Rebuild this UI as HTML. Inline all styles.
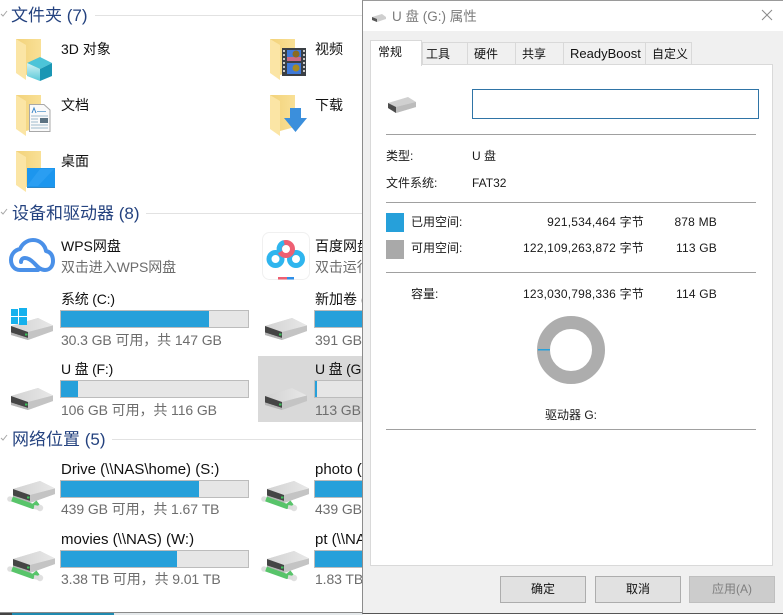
<!DOCTYPE html>
<html lang="zh"><head><meta charset="utf-8"><style>
html,body{margin:0;padding:0;width:783px;height:615px;overflow:hidden;background:#fff}
body{position:relative;font-family:"Liberation Sans","Noto Sans CJK SC",sans-serif;color:#111}
.t{position:absolute;white-space:nowrap;line-height:20px;height:20px;font-size:14px}
.h{font-size:17px;color:#24427f}
.g{color:#6d6d6d;letter-spacing:-.1px}
.n{font-size:15px}
.d{font-size:12px;color:#1a1a1a}
.r{text-align:right;letter-spacing:.2px}
.b{position:absolute;width:187px;height:16px;border:1px solid #bcbcbc;background:#e6e6e6}
.b i{display:block;height:16px;background:#26a0da}
.l{position:absolute;height:1px;background:#e2e2e2}
.s{position:absolute;height:1px;left:386px;width:370px;background:#a0a0a0}
.tab{position:absolute;top:42px;height:21px;border:1px solid #d9d9d9;border-bottom:0;background:#f0f0f0;font-size:12px;line-height:22px;text-align:left;text-indent:6px;color:#111;box-sizing:content-box;white-space:nowrap}
.btn{position:absolute;top:576px;width:84px;height:25px;border:1px solid #adadad;background:#e1e1e1;font-size:12px;line-height:25px;text-align:center;color:#111}
svg{position:absolute;left:0;top:0}
</style></head><body>

<div class="t h" style="left:11px;top:6px">文件夹 (7)</div><div class="l" style="left:95px;width:268px;top:15px"></div>
<div class="t h" style="left:12px;top:204px">设备和驱动器 (8)</div><div class="l" style="left:146px;width:217px;top:213px"></div>
<div class="t h" style="left:12px;top:430px">网络位置 (5)</div><div class="l" style="left:112px;width:251px;top:439px"></div>

<div style="position:absolute;left:258px;top:356px;width:105px;height:66px;background:#d9d9d9"></div>

<svg width="363" height="615" viewBox="0 0 363 615">
<defs>
<linearGradient id="fb" x1="0" y1="0" x2="1" y2="0"><stop offset="0" stop-color="#f2d27a"/><stop offset="1" stop-color="#f9e096"/></linearGradient>
<linearGradient id="top" x1="0" y1="0" x2="1" y2="0"><stop offset="0" stop-color="#d2d2d2"/><stop offset="1" stop-color="#e8e8e8"/></linearGradient>
<linearGradient id="cl" x1="0" y1="0" x2="0" y2="1"><stop offset="0" stop-color="#d3f3f5"/><stop offset="1" stop-color="#58c8d8"/></linearGradient>
<g id="folder">
<polygon points="0,0 25,0 25,32 10,36 0,30" fill="url(#fb)"/>
<polygon points="0,0 10,6 10,41 0,34" fill="#fbe5a5"/>
</g>
<g id="hdd">
<polygon points="0,8 27,0 42,7.500 42,13 17,22 0,17" fill="#d2d2d2"/>
<polygon points="0,8 27,0 42,7.500 17,14" fill="url(#top)"/>
<polygon points="17,14 42,7.500 42,13 17,22" fill="#c4c4c4"/>
<polygon points="0,8 17,14 17,20 0,14.500" fill="#454545"/>
<polygon points="0,14.500 17,20 17,22 0,17" fill="#b5b5b5"/>
<rect x="14" y="15.500" width="2.500" height="2" fill="#3bc45a"/>
</g>
<g id="net">
<use href="#hdd"/>
<circle cx="-3" cy="18" r="2.800" fill="#e0e0e0"/>
<circle cx="27" cy="27" r="3.200" fill="#e0e0e0"/>
<path d="M-1 18L20 25.500L25 21.500" stroke="#58c46a" stroke-width="5" fill="none" stroke-linejoin="round"/>
<path d="M21 26L26 27" stroke="#dcdcdc" stroke-width="4" fill="none"/>
</g>
</defs>

<!-- section chevrons -->
<path d="M1 14l2 2 4-5M1 212l2 2 4-5M1 438l2 2 4-5" fill="none" stroke="#a6a6a6" stroke-width="1"/>

<!-- folders -->
<use href="#folder" x="16" y="39"/><use href="#folder" x="270" y="39"/>
<use href="#folder" x="16" y="95"/><use href="#folder" x="270" y="95"/>
<use href="#folder" x="16" y="151"/>

<!-- cube -->
<polygon points="40,57 52,63 40,69 27,63" fill="#4cc4d8"/>
<polygon points="27,63 40,69 40,81 27,76" fill="url(#cl)"/>
<polygon points="40,69 52,63 52,76 40,81" fill="#1a96b4"/>

<!-- doc -->
<polygon points="29.500,104.500 44,104.500 50,110 50,131.500 29.500,131.500" fill="#fafafa" stroke="#a8a8a8"/>
<path d="M31 116h17M31 119h7M31 122h7M31 125h17M31 128h17" stroke="#9fb9cc" stroke-width="1"/>
<path d="M32 113l2-5 2 5" fill="none" stroke="#3a86c8"/><rect x="37" y="111" width="9" height="1" fill="#7fb0d6"/>
<rect x="40" y="118" width="8" height="5" fill="#5b7282"/>

<!-- film -->
<rect x="282" y="48" width="24" height="28" fill="#3a3f45"/>
<rect x="287" y="50" width="14" height="11" fill="#3f79d8"/>
<rect x="287" y="63" width="14" height="11" fill="#3f79d8"/>
<rect x="287" y="57" width="14" height="4" fill="#c96a86"/>
<circle cx="296" cy="54" r="3.500" fill="#8a6a20"/><circle cx="296" cy="68" r="3.500" fill="#a88a20"/>
<path d="M284 50v24M304 50v24" stroke="#c9c9c9" stroke-width="2" stroke-dasharray="2 2"/>

<!-- arrow -->
<polygon points="290,108 301,108 301,118 307,118 295.500,132 284,118 290,118" fill="#3b8fdc"/>

<!-- desktop -->
<rect x="27" y="168" width="28" height="20" fill="#1c96ee"/>
<polygon points="27,186 40,169 54,169 38,186" fill="#2a9ef2"/>
<rect x="27" y="187" width="28" height="1" fill="#2f86c4"/>

<!-- wps cloud -->
<path d="M38 270H20C14 270 11 265 11 260C11 254 15 250 20 249C22 244 27 240 33 240C40 240 45 245 46 251C51 252 53 256 53 261C53 266 50 270 45 270C40 270 37 266 34 263C31 260 28 258 25 258C22 258 21 260 21 262" fill="none" stroke="#4a90e8" stroke-width="4" stroke-linecap="round" stroke-linejoin="round"/>

<!-- baidu -->
<rect x="262.500" y="232.500" width="47" height="47" rx="7" fill="#fff" stroke="#f0f0f0"/>
<circle cx="275.500" cy="259" r="6.500" fill="none" stroke="#2fb5ee" stroke-width="5"/>
<circle cx="296" cy="259" r="6.500" fill="none" stroke="#2fb5ee" stroke-width="5"/>
<circle cx="286" cy="249" r="6.500" fill="none" stroke="#ee5f72" stroke-width="5"/>
<path d="M280 252a6.500 6.500 0 0 1 4-9.500" fill="none" stroke="#2fb5ee" stroke-width="5"/>
<rect x="278" y="277" width="9" height="2.500" fill="#ee5f72"/><rect x="287" y="277" width="7" height="2.500" fill="#2f8fe8"/>

<!-- drives -->
<use href="#hdd" x="11" y="318"/>
<use href="#hdd" x="265" y="318"/>
<use href="#hdd" x="11" y="388"/>
<use href="#hdd" x="265" y="388"/>
<g fill="#15b1ed"><rect x="11" y="309" width="7" height="7"/><rect x="19" y="308" width="8" height="8"/><rect x="11" y="317" width="7" height="7"/><rect x="19" y="317" width="8" height="8"/></g>
<use href="#net" x="13" y="481"/><use href="#net" x="267" y="481"/>
<use href="#net" x="13" y="551"/><use href="#net" x="267" y="551"/>
</svg>

<div class="t" style="left:61px;top:39px">3D 对象</div>
<div class="t" style="left:315px;top:39px">视频</div>
<div class="t" style="left:61px;top:95px">文档</div>
<div class="t" style="left:315px;top:95px">下载</div>
<div class="t" style="left:61px;top:151px">桌面</div>

<div class="t" style="left:61px;top:236px">WPS网盘</div>
<div class="t g" style="left:61px;top:257px">双击进入WPS网盘</div>
<div class="t" style="left:315px;top:236px">百度网盘</div>
<div class="t g" style="left:315px;top:257px">双击运行百度网盘</div>

<div class="t" style="left:61px;top:289px;letter-spacing:-.2px">系统 (C:)</div>
<div class="b" style="left:60px;top:310px"><i style="width:148px"></i></div>
<div class="t g" style="left:61px;top:330px">30.3 GB 可用，共 147 GB</div>

<div class="t" style="left:315px;top:289px">新加卷 (D:)</div>
<div class="b" style="left:314px;top:310px"><i style="width:100px"></i></div>
<div class="t g" style="left:315px;top:330px">391 GB 可用</div>

<div class="t" style="left:61px;top:359px;letter-spacing:-.2px">U 盘 (F:)</div>
<div class="b" style="left:60px;top:380px"><i style="width:17px"></i></div>
<div class="t g" style="left:61px;top:400px">106 GB 可用，共 116 GB</div>

<div class="t" style="left:315px;top:359px;letter-spacing:-.2px">U 盘 (G:)</div>
<div class="b" style="left:314px;top:380px"><i style="width:2px"></i></div>
<div class="t g" style="left:315px;top:400px">113 GB 可用</div>

<div class="t n" style="left:61px;top:460px">Drive (\\NAS\home) (S:)</div>
<div class="b" style="left:60px;top:480px"><i style="width:138px"></i></div>
<div class="t g" style="left:61px;top:499px">439 GB 可用，共 1.67 TB</div>

<div class="t n" style="left:315px;top:460px">photo (\\NAS)</div>
<div class="b" style="left:314px;top:480px"><i style="width:138px"></i></div>
<div class="t g" style="left:315px;top:499px">439 GB 可用</div>

<div class="t n" style="left:61px;top:530px">movies (\\NAS) (W:)</div>
<div class="b" style="left:60px;top:550px"><i style="width:116px"></i></div>
<div class="t g" style="left:61px;top:569px">3.38 TB 可用，共 9.01 TB</div>

<div class="t n" style="left:315px;top:530px">pt (\\NAS)</div>
<div class="b" style="left:314px;top:550px"><i style="width:100px"></i></div>
<div class="t g" style="left:315px;top:569px">1.83 TB 可用</div>

<!-- bottom strip of background -->
<div style="position:absolute;left:0;top:613px;width:363px;height:2px;background:#e4e8ea"></div>
<div style="position:absolute;left:12px;top:613px;width:102px;height:2px;background:#1f8ab0"></div>
<div style="position:absolute;left:0;top:613px;width:12px;height:2px;background:#444"></div>
<div style="position:absolute;left:0;top:612px;width:363px;height:1px;background:#8a8a8a"></div>

<!-- dialog -->
<div style="position:absolute;left:362px;top:0;width:421px;height:614px;background:#f0f0f0;border-left:1px solid #8c8c8c;border-top:1px solid #9a9a9a;border-bottom:1px solid #555;box-sizing:border-box"></div>
<div style="position:absolute;left:363px;top:1px;width:420px;height:30px;background:#fff"></div>
<div class="t" style="left:392px;top:7px;font-size:13.500px;color:#7c7c7c">U 盘 (G:) 属性</div>

<div style="position:absolute;left:370px;top:64px;width:401px;height:500px;background:#fff;border:1px solid #d9d9d9"></div>
<div class="tab" style="left:422px;width:44px;text-indent:3px">工具</div>
<div class="tab" style="left:467px;width:47px">硬件</div>
<div class="tab" style="left:515px;width:47px">共享</div>
<div class="tab" style="left:563px;width:81px;font-size:13px">ReadyBoost</div>
<div class="tab" style="left:645px;width:45px">自定义</div>
<div class="tab" style="left:370px;top:40px;width:50px;height:25px;background:#fff;line-height:22px;text-indent:7px">常规</div>

<div style="position:absolute;left:472px;top:89px;width:285px;height:28px;border:1px solid #2f74a6;background:#fff"></div>
<div class="s" style="top:134px"></div>
<div class="s" style="top:202px"></div>
<div class="s" style="top:272px"></div>
<div class="s" style="top:429px"></div>

<div class="t d" style="left:386px;top:146px">类型:</div>
<div class="t d" style="left:472px;top:146px">U 盘</div>
<div class="t d" style="left:386px;top:173px">文件系统:</div>
<div class="t d" style="left:472px;top:173px">FAT32</div>

<div style="position:absolute;left:386px;top:213px;width:18px;height:19px;background:#26a0da"></div>
<div style="position:absolute;left:386px;top:240px;width:18px;height:19px;background:#a9a9a9"></div>

<div class="t d" style="left:411px;top:212px">已用空间:</div>
<div class="t d r" style="left:444px;width:200px;top:212px">921,534,464 字节</div>
<div class="t d r" style="left:617px;width:100px;top:212px">878 MB</div>
<div class="t d" style="left:411px;top:238px">可用空间:</div>
<div class="t d r" style="left:444px;width:200px;top:238px">122,109,263,872 字节</div>
<div class="t d r" style="left:617px;width:100px;top:238px">113 GB</div>
<div class="t d" style="left:411px;top:284px">容量:</div>
<div class="t d r" style="left:444px;width:200px;top:284px">123,030,798,336 字节</div>
<div class="t d r" style="left:617px;width:100px;top:284px">114 GB</div>
<div class="t d" style="left:471px;width:200px;text-align:center;top:405px">驱动器 G:</div>

<svg width="783" height="615" viewBox="0 0 783 615">
<g>
<polygon points="388,103 408,97 416,102 416,107 396,113 388,108" fill="#d0d0d0"/>
<polygon points="388,103 396,107 396,113 388,108" fill="#4c4c4c"/>
<polygon points="396,107 416,102 416,107 396,113" fill="#bcbcbc"/>
</g>
<g>
<polygon points="372,17 382,14 386,17 386,19 377,22 372,20" fill="#cfcfcf"/>
<polygon points="372,17 377,19 377,22 372,20" fill="#555"/>
</g>
<path d="M762 10l10 10M772 10l-10 10" stroke="#8a8a8a" stroke-width="1" fill="none"/>
<circle cx="571" cy="350" r="27.500" fill="none" stroke="#adadad" stroke-width="13"/>
<rect x="538" y="349" width="12" height="1.500" fill="#26a0da"/>
</svg>

<div class="btn" style="left:500px">确定</div>
<div class="btn" style="left:595px">取消</div>
<div class="btn" style="left:689px;background:#cccccc;border-color:#bfbfbf;color:#7f7f7f">应用(A)</div>
</body></html>
